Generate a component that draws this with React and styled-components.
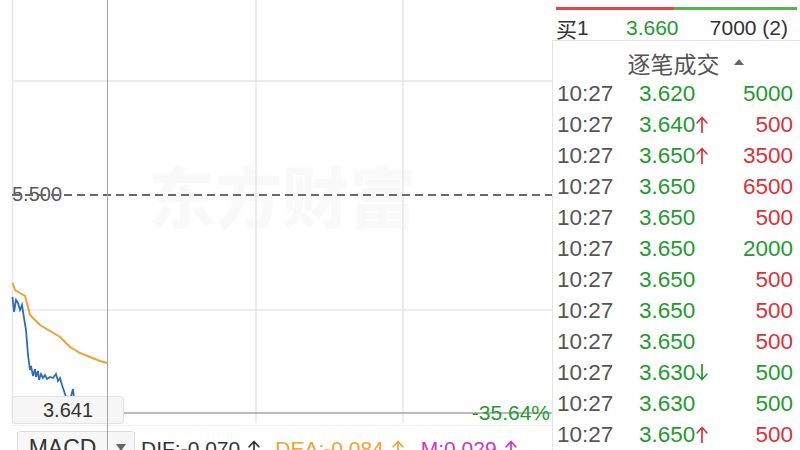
import React from "react";
import styled, { createGlobalStyle } from "styled-components";

const Global = createGlobalStyle`
  html, body { margin: 0; padding: 0; background: #fff; }
  body { width: 800px; height: 450px; overflow: hidden; font-family: "Liberation Sans", "Noto Sans CJK SC", sans-serif; }
  #root { width: 800px; height: 450px; }
`;

const GREEN = "#1f9a2f";
const RED = "#d8323b";

const Screen = styled.div`
  display: flex;
  width: 800px;
  height: 450px;
  overflow: hidden;
  background: #fff;
`;

const ChartPanel = styled.div`
  position: relative;
  flex: 0 0 552px;
  display: flex;
  flex-direction: column;
`;

const ChartArea = styled.div`
  position: relative;
  height: 426px;
  flex: 0 0 426px;
  & > svg { display: block; position: relative; z-index: 1; }
`;

const Watermark = styled.div`
  position: absolute;
  z-index: 0;
  left: 148px;
  top: 154px;
  font-family: "Noto Sans CJK SC", sans-serif;
  font-weight: 900;
  font-size: 67px;
  line-height: 80px;
  color: rgba(0, 0, 0, 0.025);
  white-space: nowrap;
`;

const AxisLabel = styled.div`
  position: absolute;
  z-index: 0;
  left: 12px;
  top: 183px;
  font-size: 20px;
  line-height: 23px;
  color: #5a5a5a;
`;

const PriceTag = styled.div`
  position: absolute;
  z-index: 2;
  left: 12px;
  top: 396px;
  width: 112px;
  height: 28px;
  box-sizing: border-box;
  border: 1px solid #e2e2e2;
  border-radius: 3px;
  background: #f6f6f6;
  display: flex;
  align-items: center;
  justify-content: center;
  font-size: 20px;
  color: #333;
`;

const PctTag = styled.div`
  position: absolute;
  z-index: 2;
  right: 2px;
  top: 401px;
  font-size: 21px;
  line-height: 24px;
  color: ${GREEN};
`;

const CrossV = styled.div`
  position: absolute;
  z-index: 3;
  left: 106.5px;
  top: 0;
  bottom: 0;
  width: 1.5px;
  background: #a4a4a4;
  pointer-events: none;
`;

const IndicatorRow = styled.div`
  display: flex;
  align-items: center;
  padding: 5px 0 0 17px;
  height: 30px;
`;

const Select = styled.div`
  display: flex;
  height: 30px;
  box-sizing: border-box;
  border: 1px solid #dcdcdc;
  border-radius: 3px;
  background: #f7f7f7;
  flex: 0 0 auto;
  margin-right: 6px;
`;

const SelectLabel = styled.div`
  width: 89px;
  display: flex;
  align-items: center;
  justify-content: center;
  font-size: 23px;
  line-height: 30px;
  padding-top: 4px;
  color: #333;
`;

const SelectArrow = styled.div`
  width: 26px;
  display: flex;
  align-items: center;
  justify-content: center;
  border-left: 1px solid #dcdcdc;
  &::after {
    content: "";
    border-left: 5px solid transparent;
    border-right: 5px solid transparent;
    border-top: 7px solid #666;
    margin-top: 2px;
  }
`;

const IndVal = styled.span`
  display: inline-flex;
  align-items: center;
  gap: 8px;
  font-size: 21px;
  line-height: 30px;
  padding-top: 5px;
  margin-right: ${(p) => p.$gap || 0}px;
  white-space: nowrap;
  color: ${(p) => p.$color};
`;

const Side = styled.div`
  flex: 1 1 auto;
  display: flex;
  flex-direction: column;
`;

const Bar = styled.div`
  display: flex;
  height: 4px;
  margin: 7px 3px 0 4px;
`;

const BarPart = styled.div`
  flex: ${(p) => p.$w};
  background: ${(p) => p.$color};
`;

const QuoteRow = styled.div`
  display: grid;
  grid-template-columns: 70px 1fr auto;
  align-items: center;
  height: 31px;
  padding: 3px 12px 0 4px;
  box-sizing: border-box;
  border-bottom: 1px solid #e4e4e4;
  font-size: 21px;
`;

const Cell = styled.span`
  display: inline-flex;
  align-items: center;
  justify-content: ${(p) => (p.$right ? "flex-end" : "flex-start")};
  color: ${(p) => p.$color || "#333"};
  white-space: nowrap;
`;

const Han = styled.span`
  font-family: "Noto Sans CJK SC", sans-serif;
`;

const TradeList = styled.div`
  flex: 1;
  border-left: 1px solid #e4e4e4;
  display: flex;
  flex-direction: column;
`;

const Title = styled.div`
  display: flex;
  align-items: center;
  justify-content: center;
  gap: 14px;
  height: 37px;
  padding-top: 7px;
  padding-left: 18px;
  box-sizing: border-box;
  font-family: "Noto Sans CJK SC", sans-serif;
  font-size: 23px;
  color: #555;
  &::after {
    content: "";
    border-left: 5px solid transparent;
    border-right: 5px solid transparent;
    border-bottom: 6px solid #666;
    margin-top: -2px;
  }
`;

const TradeRow = styled.div`
  display: grid;
  grid-template-columns: 82px 1fr auto;
  align-items: center;
  height: 31px;
  padding: 0 7px 0 4px;
  font-size: 22.5px;
`;

const ArrowSvg = styled.svg`
  flex: 0 0 auto;
  margin-left: ${(p) => p.$ml || 0}px;
  margin-top: -1px;
`;

function ArrowIcon({ dir = "up", color, ml, h = 17 }) {
  const w = Math.round(h * 0.7);
  const c = w / 2;
  const d =
    dir === "up"
      ? `M${c} 1.5 V${h - 0.5} M1.2 ${c + 0.8} L${c} 1.5 L${w - 1.2} ${c + 0.8}`
      : `M${c} 0.5 V${h - 1.5} M1.2 ${h - c - 0.8} L${c} ${h - 1.5} L${w - 1.2} ${h - c - 0.8}`;
  return (
    <ArrowSvg $ml={ml} width={w} height={h} viewBox={`0 0 ${w} ${h}`}>
      <path d={d} fill="none" stroke={color} strokeWidth="1.7" strokeLinecap="round" strokeLinejoin="round" />
    </ArrowSvg>
  );
}

const trades = [
  ["3.620", null, "5000", "g"],
  ["3.640", "up", "500", "r"],
  ["3.650", "up", "3500", "r"],
  ["3.650", null, "6500", "r"],
  ["3.650", null, "500", "r"],
  ["3.650", null, "2000", "g"],
  ["3.650", null, "500", "r"],
  ["3.650", null, "500", "r"],
  ["3.650", null, "500", "r"],
  ["3.630", "down", "500", "g"],
  ["3.630", null, "500", "g"],
  ["3.650", "up", "500", "r"],
];

const orange = [
  [12.5, 283], [15, 290], [20, 293], [25, 296], [27, 303], [30, 315], [35, 320],
  [40, 325], [45, 328], [50, 331], [55, 334], [60, 337], [65, 342], [70, 347],
  [75, 350], [80, 353], [85, 355], [90, 357], [95, 359], [100, 361], [107, 363],
];

const blue = [
  [12.5, 297], [14, 312], [16, 300], [18, 303], [20, 310], [22, 305], [24, 318],
  [26, 330], [28, 355], [30, 370], [31, 366], [33, 376], [35, 369], [36, 377],
  [38, 371], [39, 380], [41, 374], [43, 378], [45, 375], [47, 379], [50, 377],
  [53, 378], [56, 374], [58, 381], [60, 378], [62, 385], [64, 391], [66, 397],
  [70, 400], [73, 389], [74, 398],
];

const pts = (a) => a.map(([x, y]) => `${x},${y}`).join(" ");

function Chart() {
  const grid = "#e6e6e6";
  return (
    <svg width="552" height="426" viewBox="0 0 552 426">
      <line x1="12.5" y1="0" x2="12.5" y2="423" stroke={grid} strokeWidth="1.5" />
      <line x1="256" y1="0" x2="256" y2="423" stroke={grid} strokeWidth="1.5" />
      <line x1="403" y1="0" x2="403" y2="423" stroke={grid} strokeWidth="1.5" />
      <line x1="12" y1="81" x2="552" y2="81" stroke={grid} strokeWidth="1.5" />
      <line x1="12" y1="310" x2="552" y2="310" stroke={grid} strokeWidth="1.5" />
      <line x1="12" y1="425.5" x2="552" y2="425.5" stroke="#efefef" strokeWidth="1" />
      <line x1="12" y1="195" x2="552" y2="195" stroke="#6a6a6a" strokeWidth="2" strokeDasharray="8 5" />
      <polyline points={pts(orange)} fill="none" stroke="#efa232" strokeWidth="2" />
      <polyline points={pts(blue)} fill="none" stroke="#2d6db5" strokeWidth="1.8" />
      <line x1="123" y1="413" x2="552" y2="413" stroke="#a4a4a4" strokeWidth="1.5" />
    </svg>
  );
}

export default function App() {
  return (
    <Screen>
      <Global />
      <ChartPanel>
        <ChartArea>
          <Watermark>东方财富</Watermark>
          <AxisLabel>5.500</AxisLabel>
          <Chart />
          <PriceTag>3.641</PriceTag>
          <PctTag>-35.64%</PctTag>
        </ChartArea>
        <IndicatorRow>
          <Select>
            <SelectLabel>MACD</SelectLabel>
            <SelectArrow />
          </Select>
          <IndVal $color="#333" $gap={15}>
            DIF:-0.070 <ArrowIcon color="#333" h={17} />
          </IndVal>
          <IndVal $color="#efa232" $gap={17}>
            DEA:-0.084 <ArrowIcon color="#efa232" h={17} />
          </IndVal>
          <IndVal $color="#cc33cc">
            M:0.029 <ArrowIcon color="#cc33cc" h={17} />
          </IndVal>
        </IndicatorRow>
        <CrossV />
      </ChartPanel>
      <Side>
        <Bar>
          <BarPart $w={118} $color="#de4a4a" />
          <BarPart $w={124} $color="#58b04f" />
        </Bar>
        <QuoteRow>
          <Cell>
            <Han>买</Han>1
          </Cell>
          <Cell $color={GREEN}>3.660</Cell>
          <Cell $right>7000 (2)</Cell>
        </QuoteRow>
        <TradeList>
          <Title>逐笔成交</Title>
          {trades.map(([price, dir, vol, c], i) => (
            <TradeRow key={i}>
              <Cell $color="#555">10:27</Cell>
              <Cell $color={GREEN}>
                {price}
                {dir === "up" && <ArrowIcon dir="up" color={RED} ml={1} />}
                {dir === "down" && <ArrowIcon dir="down" color={GREEN} ml={1} />}
              </Cell>
              <Cell $right $color={c === "g" ? GREEN : RED}>{vol}</Cell>
            </TradeRow>
          ))}
        </TradeList>
      </Side>
    </Screen>
  );
}
